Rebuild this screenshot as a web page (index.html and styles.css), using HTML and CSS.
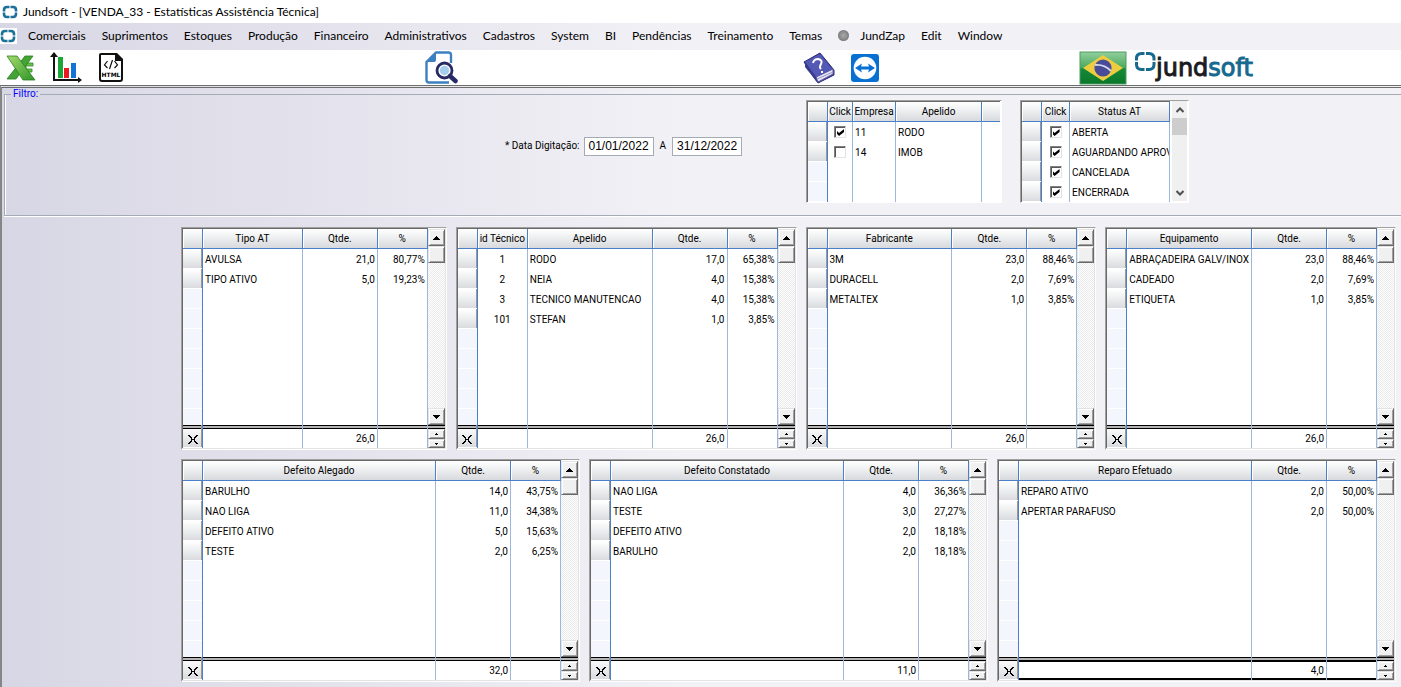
FILE: index.html
```html
<!DOCTYPE html>
<html lang="pt-BR">
<head>
<meta charset="utf-8">
<title>Jundsoft - [VENDA_33 - Estatísticas Assistência Técnica]</title>
<link rel="stylesheet" href="styles.css">
</head>
<body>
<svg class="sprite" aria-hidden="true">
  <symbol id="mark" viewBox="0 0 16 16"><g fill="none" stroke="#1c7199" stroke-width="2.6"><path d="M2 7.500V6Q2 3 5 3H7.500M8.500 3H11q3 0 3 3v1.500M14 8.500V10q0 3-3 3H8.500M7.500 13H5q-3 0-3-3V8.500"/></g></symbol>
  <symbol id="up" viewBox="0 0 7 4"><path d="M3 0h1v1h1v1h1v1h1v1H0V3h1V2h1V1h1z"/></symbol>
  <symbol id="down" viewBox="0 0 7 4"><path d="M0 0h7v1H6v1H5v1H4v1H3V3H2V2H1V1H0z"/></symbol>
  <symbol id="up-s" viewBox="0 0 3 2"><path d="M1 0h1v1h1v1H0V1h1z"/></symbol>
  <symbol id="down-s" viewBox="0 0 3 2"><path d="M0 0h3v1H2v1H1V1H0z"/></symbol>
  <symbol id="sum" viewBox="0 0 10 9"><path d="M0 0h2v1H0zM8 0h2v1H8zM2 1h1v1H2zM7 1h1v1H7zM3 2h1v2h2V2h1v5H6V5H4v2H3zM2 7h1v1H2zM7 7h1v1H7zM0 8h2v1H0zM8 8h2v1H8zM1 1h1v1H1zM8 1h1v1H8zM2 2h1v1H2zM7 2h1v1H7zM2 6h1v1H2zM7 6h1v1H7zM1 7h1v1H1zM8 7h1v1H8z"/></symbol>
</svg>

<header>
  <div class="titlebar"><svg class="mark"><use href="#mark"/></svg><h1>Jundsoft - [VENDA_33 - Estatísticas Assistência Técnica]</h1></div>
  <nav class="menubar">
    <span class="mdi"><svg class="mark"><use href="#mark"/></svg></span>
    <button>Comerciais</button><button>Suprimentos</button><button>Estoques</button><button>Produção</button><button>Financeiro</button><button>Administrativos</button><button>Cadastros</button><button>System</button><button>BI</button><button>Pendências</button><button>Treinamento</button><button>Temas</button><button class="zap"><i class="dot"></i>JundZap</button><button>Edit</button><button>Window</button>
  </nav>
  <div class="toolbar">
    <div class="tools exports">
      <button aria-label="Excel"><svg width="30" height="28" viewBox="0 0 30 28"><defs><linearGradient id="gx" x2="1" y2="1"><stop stop-color="#a4dc6c"/><stop offset="1" stop-color="#2f9428"/></linearGradient></defs><path d="M18 9h9v3h-7v3h6v3h-5v5h-4z" fill="#6cc04a" stroke="#2f8a2b" stroke-width=".8"/><path d="M19 2h8L10 25H1z" fill="#45a336" stroke="#277d22" stroke-width=".8"/><path d="M1 2h10l18 24H17z" fill="url(#gx)" stroke="#277d22" stroke-width=".8"/></svg></button>
      <button aria-label="Gráfico"><svg width="32" height="32" viewBox="0 0 32 32"><path d="M4 3v25h25" fill="none" stroke="#111" stroke-width="2"/><path d="M4 0l4 5H0zM32 28l-4-3v6z" fill="#111"/><path d="M8 5h5v21H8z" fill="#1ca637"/><path d="M14 16h5v10h-5z" fill="#ee1a22"/><path d="M21 11h5v15h-5z" fill="#1374d6"/></svg></button>
      <button aria-label="HTML"><svg width="26" height="31" viewBox="0 0 26 31"><path d="M3 2h15l6 6v19q0 2-2 2H4q-2 0-2-2V3q0-1 1-1z" fill="#fff" stroke="#111" stroke-width="2"/><path d="M17 1h2l6 6v2h-8z" fill="#111"/><path d="M9.500 9l-3 4 3 3M16.500 9l3 4-3 3M14.500 8l-3 9" fill="none" stroke="#111" stroke-width="1.200"/><text x="13" y="25" text-anchor="middle" class="html-tag">HTML</text></svg></button>
    </div>
    <div class="tools preview">
      <button aria-label="Visualizar"><svg width="33" height="33" viewBox="0 0 33 33"><path d="M26 12V4q0-2.500-2.500-2.500H11L1.500 11v18q0 2.500 2.500 2.500h20" fill="#fff" stroke="#3d80c2" stroke-width="2.400"/><path d="M11 1v8q0 2-2 2H1z" fill="#3d80c2"/><circle cx="19.500" cy="19.500" r="7.500" fill="#fff" stroke="#282a68" stroke-width="2.800"/><circle cx="19.500" cy="19.500" r="4.700" fill="#a5cdec"/><path d="M25 25l5.500 5" stroke="#282a68" stroke-width="4.500" stroke-linecap="round"/></svg></button>
    </div>
    <div class="tools help">
      <button aria-label="Ajuda"><svg width="32" height="32" viewBox="0 0 32 32"><path d="M1 10L17 1l14 17v5L15 31l-3-4z" fill="#40419a" stroke="#2c2d75"/><path d="M13 25l17-8v5l-15 8z" fill="#e4e3f2" stroke="#5a5aa8"/><path d="M14 27l16-7" stroke="#9a99c4"/><path d="M2 10L17 2l12 15-16 8z" fill="#5359b4"/><path d="M2 10l11 15 1 5L2 15z" fill="#373a8d"/><path d="M10 11q1-4 5-4 5 1 3 5-2 3 0 5M19 19v2" fill="none" stroke="#fff" stroke-width="2"/></svg></button>
      <button aria-label="TeamViewer"><svg width="28" height="28" viewBox="0 0 28 28"><rect width="28" height="28" rx="3" fill="#0870d3"/><circle cx="14" cy="14" r="11.300" fill="#fff"/><path d="M4 14l7-4.500-1 3h8l-1-3 7 4.500-7 4.500 1-3h-8l1 3z" fill="#0870d3"/></svg></button>
    </div>
    <div class="tools brand">
      <button aria-label="Português (Brasil)"><svg width="48" height="34" viewBox="0 0 48 34"><defs><linearGradient id="gf" x2="0" y2="1"><stop stop-color="#92cf9e"/><stop offset=".5" stop-color="#49a95c"/><stop offset=".52" stop-color="#168a36"/><stop offset="1" stop-color="#0a772c"/></linearGradient></defs><rect x="1" y="1" width="46" height="32" fill="url(#gf)" stroke="#4f9c60"/><path d="M4 17L24 4l20 13-20 13z" fill="#edcc3f"/><circle cx="24" cy="17" r="8.600" fill="#4a4b98"/><path d="M16 14q9-1 16 6" fill="none" stroke="#d4d9e8" stroke-width="1.800"/></svg></button>
      <div class="logo"><svg width="21" height="20" viewBox="0 0 21 20"><path d="M1.500 8.500V6.500q0-5 5-5h3M11 1.500h3q5 0 5 5v2M19 10v2.500q0 5-5 5h-3M9.500 17.500h-3q-5 0-5-5V10" fill="none" stroke="#16698f" stroke-width="3"/></svg><span>jund<b>soft</b></span></div>
    </div>
  </div>
</header>

<main>
  <fieldset class="filter">
    <legend>Filtro:</legend>
    <div class="dates">
      <label for="d1">* Data Digitação:</label><input id="d1" type="text" value="01/01/2022">
      <label class="to" for="d2">A</label><input id="d2" type="text" value="31/12/2022">
    </div>
    <div class="panel pick company">
      <table>
        <colgroup><col class="c-h"><col class="c-click"><col class="c-emp"><col><col class="c-end"></colgroup>
        <thead><tr><th></th><th>Click</th><th>Empresa</th><th>Apelido</th><th></th></tr></thead>
        <tbody>
          <tr><th></th><td class="mid"><input type="checkbox" aria-label="RODO" checked></td><td>11</td><td>RODO</td><td></td></tr>
          <tr><th></th><td class="mid"><input type="checkbox" aria-label="IMOB"></td><td>14</td><td>IMOB</td><td></td></tr>
          <tr class="fill"><th></th><td></td><td></td><td></td><td></td></tr>
        </tbody>
      </table>
    </div>
    <div class="panel pick status">
      <table>
        <colgroup><col class="c-h"><col class="c-click2"><col></colgroup>
        <thead><tr><th></th><th>Click</th><th>Status AT</th></tr></thead>
        <tbody>
          <tr><th></th><td class="mid"><input type="checkbox" aria-label="ABERTA" checked></td><td>ABERTA</td></tr>
          <tr><th></th><td class="mid"><input type="checkbox" aria-label="AGUARDANDO APROV" checked></td><td>AGUARDANDO APROV</td></tr>
          <tr><th></th><td class="mid"><input type="checkbox" aria-label="CANCELADA" checked></td><td>CANCELADA</td></tr>
          <tr><th></th><td class="mid"><input type="checkbox" aria-label="ENCERRADA" checked></td><td>ENCERRADA</td></tr>
        </tbody>
      </table>
      <div class="flatbar"><button aria-label="Subir"><svg width="8" height="6" viewBox="0 0 8 6"><path d="M0.500 5L4 1.500 7.500 5"/></svg></button><i></i><button aria-label="Descer"><svg width="8" height="6" viewBox="0 0 8 6"><path d="M0.500 1L4 4.500 7.500 1"/></svg></button></div>
    </div>
  </fieldset>

  <section class="row top">
    <div class="panel w-tipo">
      <table>
        <colgroup><col class="c-h"><col><col class="c-q"><col class="c-p"></colgroup>
        <thead><tr><th></th><th>Tipo AT</th><th>Qtde.</th><th>%</th></tr></thead>
        <tbody>
          <tr><th></th><td>AVULSA</td><td class="n">21,0</td><td class="n">80,77%</td></tr>
          <tr><th></th><td>TIPO ATIVO</td><td class="n">5,0</td><td class="n">19,23%</td></tr>
          <tr class="fill"><th></th><td></td><td></td><td></td></tr>
        </tbody>
        <tfoot><tr><th><svg class="sum"><use href="#sum"/></svg></th><td></td><td class="n">26,0</td><td></td></tr></tfoot>
      </table>
      <div class="side"><div class="scroll"><button aria-label="Subir"><svg><use href="#up"/></svg></button><i></i><button aria-label="Descer"><svg><use href="#down"/></svg></button></div><div class="spin"><button aria-label="Anterior"><svg><use href="#up-s"/></svg></button><button aria-label="Próximo"><svg><use href="#down-s"/></svg></button></div></div>
    </div>

    <div class="panel w-tec">
      <table>
        <colgroup><col class="c-h"><col class="c-p"><col><col class="c-q"><col class="c-p"></colgroup>
        <thead><tr><th></th><th>id Técnico</th><th>Apelido</th><th>Qtde.</th><th>%</th></tr></thead>
        <tbody>
          <tr><th></th><td class="mid">1</td><td>RODO</td><td class="n">17,0</td><td class="n">65,38%</td></tr>
          <tr><th></th><td class="mid">2</td><td>NEIA</td><td class="n">4,0</td><td class="n">15,38%</td></tr>
          <tr><th></th><td class="mid">3</td><td>TECNICO MANUTENCAO</td><td class="n">4,0</td><td class="n">15,38%</td></tr>
          <tr><th></th><td class="mid">101</td><td>STEFAN</td><td class="n">1,0</td><td class="n">3,85%</td></tr>
          <tr class="fill"><th></th><td></td><td></td><td></td><td></td></tr>
        </tbody>
        <tfoot><tr><th><svg class="sum"><use href="#sum"/></svg></th><td></td><td></td><td class="n">26,0</td><td></td></tr></tfoot>
      </table>
      <div class="side"><div class="scroll"><button aria-label="Subir"><svg><use href="#up"/></svg></button><i></i><button aria-label="Descer"><svg><use href="#down"/></svg></button></div><div class="spin"><button aria-label="Anterior"><svg><use href="#up-s"/></svg></button><button aria-label="Próximo"><svg><use href="#down-s"/></svg></button></div></div>
    </div>

    <div class="panel w-fab">
      <table>
        <colgroup><col class="c-h"><col><col class="c-q"><col class="c-p"></colgroup>
        <thead><tr><th></th><th>Fabricante</th><th>Qtde.</th><th>%</th></tr></thead>
        <tbody>
          <tr><th></th><td>3M</td><td class="n">23,0</td><td class="n">88,46%</td></tr>
          <tr><th></th><td>DURACELL</td><td class="n">2,0</td><td class="n">7,69%</td></tr>
          <tr><th></th><td>METALTEX</td><td class="n">1,0</td><td class="n">3,85%</td></tr>
          <tr class="fill"><th></th><td></td><td></td><td></td></tr>
        </tbody>
        <tfoot><tr><th><svg class="sum"><use href="#sum"/></svg></th><td></td><td class="n">26,0</td><td></td></tr></tfoot>
      </table>
      <div class="side"><div class="scroll"><button aria-label="Subir"><svg><use href="#up"/></svg></button><i></i><button aria-label="Descer"><svg><use href="#down"/></svg></button></div><div class="spin"><button aria-label="Anterior"><svg><use href="#up-s"/></svg></button><button aria-label="Próximo"><svg><use href="#down-s"/></svg></button></div></div>
    </div>

    <div class="panel w-fab">
      <table>
        <colgroup><col class="c-h"><col><col class="c-q"><col class="c-p"></colgroup>
        <thead><tr><th></th><th>Equipamento</th><th>Qtde.</th><th>%</th></tr></thead>
        <tbody>
          <tr><th></th><td>ABRAÇADEIRA GALV/INOX</td><td class="n">23,0</td><td class="n">88,46%</td></tr>
          <tr><th></th><td>CADEADO</td><td class="n">2,0</td><td class="n">7,69%</td></tr>
          <tr><th></th><td>ETIQUETA</td><td class="n">1,0</td><td class="n">3,85%</td></tr>
          <tr class="fill"><th></th><td></td><td></td><td></td></tr>
        </tbody>
        <tfoot><tr><th><svg class="sum"><use href="#sum"/></svg></th><td></td><td class="n">26,0</td><td></td></tr></tfoot>
      </table>
      <div class="side"><div class="scroll"><button aria-label="Subir"><svg><use href="#up"/></svg></button><i></i><button aria-label="Descer"><svg><use href="#down"/></svg></button></div><div class="spin"><button aria-label="Anterior"><svg><use href="#up-s"/></svg></button><button aria-label="Próximo"><svg><use href="#down-s"/></svg></button></div></div>
    </div>
  </section>

  <section class="row bottom">
    <div class="panel w-def">
      <table>
        <colgroup><col class="c-h"><col><col class="c-q"><col class="c-p"></colgroup>
        <thead><tr><th></th><th>Defeito Alegado</th><th>Qtde.</th><th>%</th></tr></thead>
        <tbody>
          <tr><th></th><td>BARULHO</td><td class="n">14,0</td><td class="n">43,75%</td></tr>
          <tr><th></th><td>NAO LIGA</td><td class="n">11,0</td><td class="n">34,38%</td></tr>
          <tr><th></th><td>DEFEITO ATIVO</td><td class="n">5,0</td><td class="n">15,63%</td></tr>
          <tr><th></th><td>TESTE</td><td class="n">2,0</td><td class="n">6,25%</td></tr>
          <tr class="fill"><th></th><td></td><td></td><td></td></tr>
        </tbody>
        <tfoot><tr><th><svg class="sum"><use href="#sum"/></svg></th><td></td><td class="n">32,0</td><td></td></tr></tfoot>
      </table>
      <div class="side"><div class="scroll"><button aria-label="Subir"><svg><use href="#up"/></svg></button><i></i><button aria-label="Descer"><svg><use href="#down"/></svg></button></div><div class="spin"><button aria-label="Anterior"><svg><use href="#up-s"/></svg></button><button aria-label="Próximo"><svg><use href="#down-s"/></svg></button></div></div>
    </div>

    <div class="panel w-def">
      <table>
        <colgroup><col class="c-h"><col><col class="c-q"><col class="c-p"></colgroup>
        <thead><tr><th></th><th>Defeito Constatado</th><th>Qtde.</th><th>%</th></tr></thead>
        <tbody>
          <tr><th></th><td>NAO LIGA</td><td class="n">4,0</td><td class="n">36,36%</td></tr>
          <tr><th></th><td>TESTE</td><td class="n">3,0</td><td class="n">27,27%</td></tr>
          <tr><th></th><td>DEFEITO ATIVO</td><td class="n">2,0</td><td class="n">18,18%</td></tr>
          <tr><th></th><td>BARULHO</td><td class="n">2,0</td><td class="n">18,18%</td></tr>
          <tr class="fill"><th></th><td></td><td></td><td></td></tr>
        </tbody>
        <tfoot><tr><th><svg class="sum"><use href="#sum"/></svg></th><td></td><td class="n">11,0</td><td></td></tr></tfoot>
      </table>
      <div class="side"><div class="scroll"><button aria-label="Subir"><svg><use href="#up"/></svg></button><i></i><button aria-label="Descer"><svg><use href="#down"/></svg></button></div><div class="spin"><button aria-label="Anterior"><svg><use href="#up-s"/></svg></button><button aria-label="Próximo"><svg><use href="#down-s"/></svg></button></div></div>
    </div>

    <div class="panel w-def active">
      <table>
        <colgroup><col class="c-h"><col><col class="c-q"><col class="c-p"></colgroup>
        <thead><tr><th></th><th>Reparo Efetuado</th><th>Qtde.</th><th>%</th></tr></thead>
        <tbody>
          <tr><th></th><td>REPARO ATIVO</td><td class="n">2,0</td><td class="n">50,00%</td></tr>
          <tr><th></th><td>APERTAR PARAFUSO</td><td class="n">2,0</td><td class="n">50,00%</td></tr>
          <tr class="fill"><th></th><td></td><td></td><td></td></tr>
        </tbody>
        <tfoot><tr><th><svg class="sum"><use href="#sum"/></svg></th><td></td><td class="n">4,0</td><td></td></tr></tfoot>
      </table>
      <div class="side"><div class="scroll"><button aria-label="Subir"><svg><use href="#up"/></svg></button><i></i><button aria-label="Descer"><svg><use href="#down"/></svg></button></div><div class="spin"><button aria-label="Anterior"><svg><use href="#up-s"/></svg></button><button aria-label="Próximo"><svg><use href="#down-s"/></svg></button></div></div>
    </div>
  </section>
</main>
</body>
</html>
```

FILE: styles.css
```css
* { box-sizing: border-box; }
:root {
  --line: #9bb7dc;
  --line-strong: #4a80c8;
  --face: linear-gradient(90deg, #d7d6e4, #f2f1f6 680px);
  --cell: linear-gradient(#ffffff, #f0f1f2 40%, #d7d9dd);
}
body {
  margin: 0;
  min-height: 100vh;
  display: flex;
  flex-direction: column;
  background: #fff;
  color: #000;
  font: 10px/20px Roboto, Arial, sans-serif;
}
button { margin: 0; padding: 0; border: 0; background: none; font: inherit; color: inherit; }
svg { display: block; }
.sprite { width: 0; height: 0; position: absolute; }

/* window header */
.titlebar, .menubar { font-family: Lato, "Open Sans", sans-serif; font-size: 12px; display: flex; align-items: center; }
.titlebar { height: 23px; padding-left: 2px; gap: 5px; }
.titlebar h1 { margin: 0; font-size: 12px; font-weight: 400; }
.mark { width: 16px; height: 16px; }
.menubar { height: 27px; padding-bottom: 2px; background: var(--face); gap: 16px; }
.mdi { background: #fff; padding: 0 1px 0 0; margin-right: -5px; }
.zap { display: flex; align-items: center; gap: 11px; }
.dot { width: 11px; height: 11px; border-radius: 50%; background: radial-gradient(#aaa, #888 55%, #555); }
.toolbar { height: 35px; display: flex; align-items: center; }
.tools { display: flex; align-items: center; }
.exports { padding-left: 6px; gap: 14px; }
.exports button + button + button { margin-left: 2px; }
.preview { margin-left: 301px; }
.help { margin-left: 345px; gap: 16px; }
.brand { margin-left: 200px; gap: 8px; }
.html-tag { font: bold 6px "DejaVu Sans", sans-serif; }
.logo { display: flex; align-items: flex-start; font: 24px/38px "DejaVu Sans", sans-serif; color: #1b1b1f; -webkit-text-stroke: 1px currentColor; }
.logo svg { margin-top: 3px; }
.logo b { font-weight: 400; color: #16698f; }

/* work area */
main {
  flex: 1;
  border-top: 3px double #6b6e6b;
  border-left: 2px solid #858585;
  background: var(--face);
}
.filter {
  margin: 0 0 0 2px;
  padding: 0 0 12px 500px;
  border: 1px solid #a4abb5;
  border-right: 0;
  min-width: 0;
  display: flex;
  align-items: flex-start;
  box-shadow: 0 1px #fff, inset 1px 0 #fff;
}
.filter legend { margin-left: -494px; padding: 0 2px; line-height: 12px; color: #00f; }
.dates { display: flex; align-items: center; gap: 4px; margin-top: 36px; }
.to { padding: 0 2px; }
.dates input {
  width: 70px;
  height: 19px;
  padding: 0 0 1px;
  border: 1px solid #a4abb5;
  background: #fff;
  font: 12px "Liberation Sans", Arial, sans-serif;
  text-align: center;
}

/* grids */
.panel {
  display: flex;
  background: #fff;
  border: 1px solid;
  border-color: #a0a0a0 #fff #fff #a0a0a0;
}
.panel > table { flex: 1; min-width: 0; border-top: 1px solid #696969; border-left: 1px solid #696969; }
table { table-layout: fixed; border-spacing: 0; width: 0; }
.c-h { width: 20px; }
.c-q { width: 75px; }
.c-p { width: 50px; }
.c-click { width: 25px; }
.c-click2 { width: 28px; }
.c-emp { width: 43px; }
.c-end { width: 18px; }
th, td { height: 20px; padding: 2px 2px 0; line-height: 18px; font-weight: 400; text-align: left; white-space: nowrap; overflow: hidden; border-right: 1px solid var(--line); }
.n { text-align: right; }
.mid { padding-top: 0; text-align: center; }
.row .mid { padding-top: 2px; }
thead th { padding: 1px 0 0; text-align: center; background: var(--cell); border-right-color: var(--line-strong); border-bottom: 1px solid var(--line-strong); box-shadow: inset 1px 0 #fff; }
tbody th, tfoot th { background: var(--cell) padding-box; border-right-color: var(--line-strong); box-shadow: inset 0 -1px #fff, inset -1px 0 #999; }
.fill th, .fill td { height: auto; padding: 0; }
.fill th { background: repeating-linear-gradient(#f3f7fd 0 19px, #fff 19px 20px); box-shadow: none; }
tfoot th, tfoot td { height: 23px; padding-top: 5px; background: linear-gradient(#000 0 1px, #b4b4b4 1px 3px, #000 3px 4px, transparent 4px); }
tfoot th { background: linear-gradient(#000 0 1px, #b4b4b4 1px 3px, #000 3px 4px, transparent 4px), var(--cell); }
.sum { width: 10px; height: 9px; margin: 0 auto; }
.side { width: 17px; margin-top: 1px; display: flex; flex-direction: column; }
.scroll { flex: 1; display: flex; flex-direction: column; background: repeating-conic-gradient(#fff 0 25%, #eaeaea 0 50%) 0 0 / 2px 2px; }
.scroll button, .scroll i, .spin button {
  height: 17px;
  display: flex;
  align-items: center;
  justify-content: center;
  background: #f0f0f0;
  border: 1px solid;
  border-color: #e3e3e3 #696969 #696969 #e3e3e3;
  box-shadow: inset 1px 1px #fff, inset -1px -1px #a0a0a0;
}
.scroll button:last-child { margin-top: auto; }
.scroll svg { width: 7px; height: 4px; }
.spin { height: 23px; padding-top: 4px; background: linear-gradient(#000 0 1px, #b4b4b4 1px 3px, #000 3px 4px, transparent 4px); }
.spin button { width: 17px; height: 10px; }
.spin button + button { height: 9px; }
.spin svg { width: 3px; height: 2px; }
.row .panel { padding: 0 1px 1px 0; height: 223px; box-shadow: inset -1px -1px #e3e3e3; }
.row .panel > table { height: 220px; }
.active tfoot td { background: linear-gradient(#000 0 1px, #b4b4b4 1px 3px, #000 3px 5px, transparent 5px 21px, #000 21px); }

/* filter lists */
.pick { height: 103px; overflow: hidden; padding: 0 1px 1px 0; }
.company { width: 196px; margin-left: 64px; }
.company td:last-child, .company th:last-child { border-right: 0; }
.company table { height: 101px; }
.status { width: 169px; margin-left: 18px; }
.filter input[type="checkbox"] {
  appearance: none;
  display: block;
  width: 12px;
  height: 12px;
  margin: 0 auto;
  border: 1px solid;
  border-color: #808080 #e3e3e3 #e3e3e3 #808080;
  box-shadow: inset 1px 1px #555;
  background: #fff;
}
.filter input[type="checkbox"]:checked::before {
  content: "";
  display: block;
  width: 7px;
  height: 7px;
  margin: 2px;
  background: #000;
  clip-path: polygon(0 28%, 28% 57%, 100% 0, 100% 43%, 28% 100%, 0 71%);
}
.flatbar { width: 15px; margin-left: 2px; background: #f0f0f0; display: flex; flex-direction: column; }
.flatbar button { height: 17px; display: grid; place-items: center; }
.flatbar button:last-child { margin-top: auto; }
.flatbar i { height: 17px; background: #cdcdcd; }
.flatbar path { fill: none; stroke: #505050; stroke-width: 2; }

/* result grids */
.row { display: flex; gap: 9px; margin-left: 2px; }
.top { margin-top: 11px; padding: 0 5px 0 177px; }
.bottom { margin-top: 9px; padding: 0 5px 5px 177px; }
.w-tipo { flex: 1 1 266px; }
.w-tec { flex: 1 1 341px; }
.w-fab { flex: 1 1 291px; }
.w-def { flex: 1 1 399px; }
```
